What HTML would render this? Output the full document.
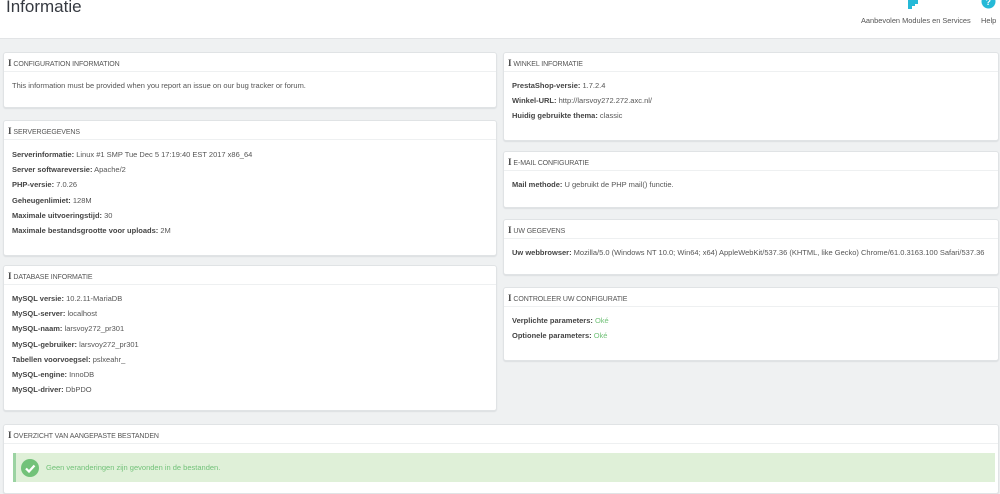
<!DOCTYPE html>
<html><head><meta charset="utf-8"><style>
*{box-sizing:border-box;margin:0;padding:0}
body{width:1000px;height:486px;overflow:hidden;background:#eff1f2;font-family:"Liberation Sans",sans-serif;color:#555;font-size:7.5px;position:relative}
.top{position:absolute;left:0;top:0;width:1000px;height:39px;background:#fff;border-bottom:1px solid #e2e4e6}
.top h1{position:absolute;left:6px;top:-3px;font-weight:normal;font-size:17px;color:#363a41}
.tl{position:absolute;top:16px;font-size:7.4px;color:#555}
.panel{position:absolute;background:#fff;border:1px solid #e0e3e5;border-radius:3px;box-shadow:0 1px 1px #dcdfe1}
.ph{height:19px;border-bottom:1px solid #eef0f1;padding:5px 0 0 4px;font-size:7px;color:#555;text-transform:uppercase;letter-spacing:-.1px}
.ph b{font-family:"Liberation Serif",serif;font-size:9px;font-weight:bold;margin-right:2px;color:#444}
.pb{padding:9px 8px 0}
.pb p{line-height:15.2px;white-space:nowrap}
.pb strong{color:#444}
.ok{color:#72c279}
</style></head><body>
<div class="top"><h1>Informatie</h1>
<svg style="position:absolute;left:906px;top:-3px" width="18" height="12" viewBox="0 0 18 12"><path d="M2 0h7v2h3v5h-3v2h-3v3h-4z" fill="#25b9d7"/></svg>
<svg style="position:absolute;left:981px;top:-6px" width="15" height="15"><circle cx="7.5" cy="7.5" r="7" fill="#25b9d7"/><text x="4.5" y="11" font-size="9" fill="#fff" font-weight="bold" font-family="Liberation Sans">?</text></svg>
<div class="tl" style="left:861px">Aanbevolen Modules en Services</div>
<div class="tl" style="left:981px">Help</div>
</div>

<div class="panel" style="left:3px;top:52px;width:494px;height:56px"><div class="ph"><b>i</b>Configuration information</div><div class="pb" style="padding-top:6px"><p>This information must be provided when you report an issue on our bug tracker or forum.</p></div></div>

<div class="panel" style="left:3px;top:120px;width:494px;height:136px"><div class="ph"><b>i</b>Servergegevens</div><div class="pb" style="padding-top:7px">
<p><strong>Serverinformatie:</strong> Linux #1 SMP Tue Dec 5 17:19:40 EST 2017 x86_64</p>
<p><strong>Server softwareversie:</strong> Apache/2</p>
<p><strong>PHP-versie:</strong> 7.0.26</p>
<p><strong>Geheugenlimiet:</strong> 128M</p>
<p><strong>Maximale uitvoeringstijd:</strong> 30</p>
<p><strong>Maximale bestandsgrootte voor uploads:</strong> 2M</p></div></div>

<div class="panel" style="left:3px;top:265px;width:494px;height:146px"><div class="ph"><b>i</b>Database informatie</div><div class="pb" style="padding-top:6px">
<p><strong>MySQL versie:</strong> 10.2.11-MariaDB</p>
<p><strong>MySQL-server:</strong> localhost</p>
<p><strong>MySQL-naam:</strong> larsvoy272_pr301</p>
<p><strong>MySQL-gebruiker:</strong> larsvoy272_pr301</p>
<p><strong>Tabellen voorvoegsel:</strong> pslxeahr_</p>
<p><strong>MySQL-engine:</strong> InnoDB</p>
<p><strong>MySQL-driver:</strong> DbPDO</p></div></div>

<div class="panel" style="left:503px;top:52px;width:496px;height:89px"><div class="ph"><b>i</b>Winkel informatie</div><div class="pb" style="padding-top:6px">
<p><strong>PrestaShop-versie:</strong> 1.7.2.4</p>
<p><strong>Winkel-URL:</strong> http://larsvoy272.272.axc.nl/</p>
<p><strong>Huidig gebruikte thema:</strong> classic</p></div></div>

<div class="panel" style="left:503px;top:151px;width:496px;height:57px"><div class="ph"><b>i</b>E-mail configuratie</div><div class="pb" style="padding-top:6px"><p><strong>Mail methode:</strong> U gebruikt de PHP mail() functie.</p></div></div>

<div class="panel" style="left:503px;top:219px;width:496px;height:56px"><div class="ph"><b>i</b>Uw gegevens</div><div class="pb" style="padding-top:6px"><p><strong>Uw webbrowser:</strong> Mozilla/5.0 (Windows NT 10.0; Win64; x64) AppleWebKit/537.36 (KHTML, like Gecko) Chrome/61.0.3163.100 Safari/537.36</p></div></div>

<div class="panel" style="left:503px;top:287px;width:496px;height:74px"><div class="ph"><b>i</b>Controleer uw configuratie</div><div class="pb" style="padding-top:6px">
<p><strong>Verplichte parameters:</strong> <span class="ok">Oké</span></p>
<p><strong>Optionele parameters:</strong> <span class="ok">Oké</span></p></div></div>

<div class="panel" style="left:3px;top:424px;width:996px;height:70px"><div class="ph"><b>i</b>Overzicht van aangepaste bestanden</div>
<div style="position:absolute;left:9px;top:28px;width:982px;height:29px;background:#dff0d8;border-left:3px solid #9bd3a2;">
<svg style="position:absolute;left:5px;top:6px" width="18" height="18"><circle cx="9" cy="9" r="9" fill="#72c279"/><path d="M5 9.5l3 3 5.5-6" stroke="#fff" stroke-width="2.2" fill="none"/></svg>
<span style="position:absolute;left:30px;top:10px;color:#72c279;font-size:7.5px">Geen veranderingen zijn gevonden in de bestanden.</span></div></div>
</body></html>
